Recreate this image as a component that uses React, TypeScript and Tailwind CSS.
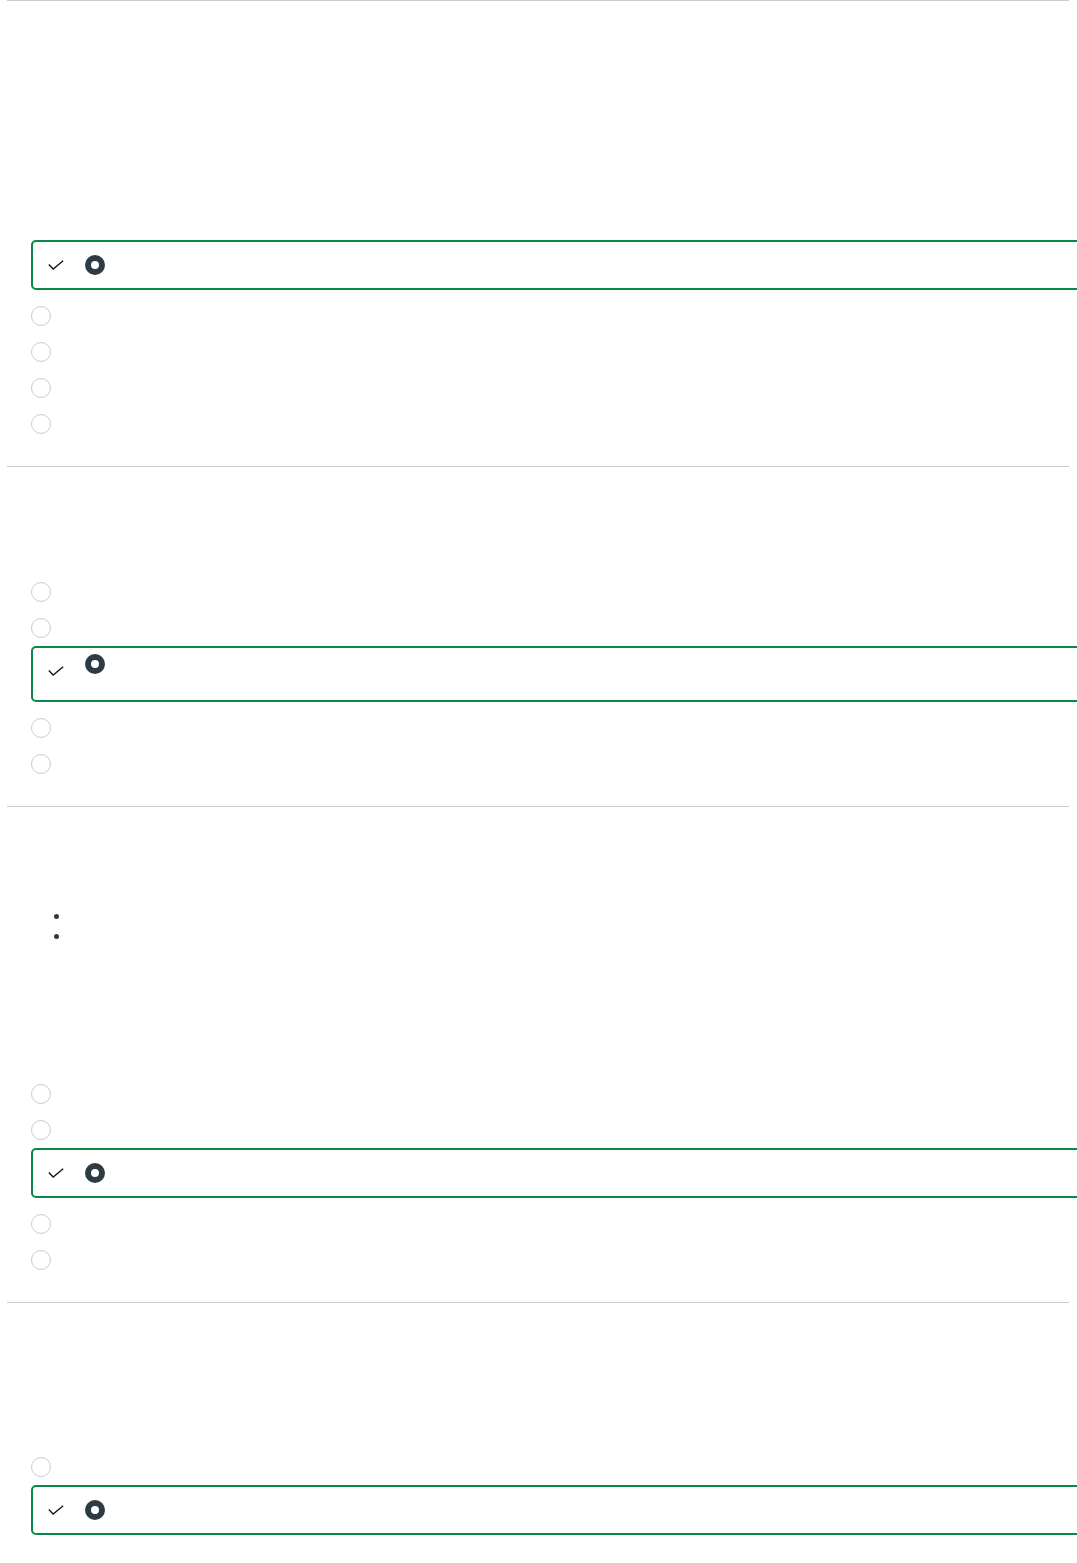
import React from "react";

type Opt = { correct?: boolean; tall?: boolean };

function EmptyRadio() {
  return <span className="block h-5 w-5 rounded-full border border-[#c7cdd1] bg-white" />;
}

function Check({ tall }: { tall?: boolean }) {
  return (
    <svg width="16" height="10" viewBox="0 0 16 10" className={tall ? "mb-[6px] shrink-0" : "shrink-0"}>
      <polyline points="0.8,4.6 5.2,9 15.2,0.8" fill="none" stroke="#111820" strokeWidth="1.4" />
    </svg>
  );
}

function Option({ correct, tall }: Opt) {
  if (!correct) {
    return (
      <div className="flex h-9 items-center">
        <EmptyRadio />
      </div>
    );
  }
  return (
    <div
      className={
        tall
          ? "mb-2 flex h-[56px] w-[calc(100%+40px)] items-center rounded-[5px] border-2 border-[#0b874b] pl-[15px]"
          : "mb-2 flex h-[50px] w-[calc(100%+40px)] items-center rounded-[5px] border-2 border-[#0b874b] pl-[15px]"
      }
    >
      <Check tall={tall} />
      <span
        className={
          tall
            ? "ml-[21px] mb-[20px] block h-5 w-5 rounded-full border-[6px] border-[#2d3b45] bg-white"
            : "ml-[21px] block h-5 w-5 rounded-full border-[6px] border-[#2d3b45] bg-white"
        }
      />
      <span className="ml-3 text-sm text-transparent">&nbsp;</span>
    </div>
  );
}

function Question({ header, options, children }: { header: number; options: Opt[]; children?: React.ReactNode }) {
  return (
    <section className="border-t border-[#c7cdd1] pb-6">
      <div style={{ height: header }}>{children}</div>
      <div className="pl-6">
        {options.map((o, i) => (
          <Option key={i} {...o} />
        ))}
      </div>
    </section>
  );
}

export default function App() {
  return (
    <div className="min-h-[1563px] w-full overflow-hidden bg-white" style={{ fontFamily: "Lato, 'Liberation Sans', sans-serif" }}>
      <div className="pl-[7px] pr-[8px]">
        <Question header={239} options={[{ correct: true }, {}, {}, {}, {}]} />
        <Question header={107} options={[{}, {}, { correct: true, tall: true }, {}, {}]} />
        <Question header={269} options={[{}, {}, { correct: true }, {}, {}]}>
          <ul className="pt-[99px] pl-[47px]">
            <li className="flex h-5 items-center">
              <span className="block h-[5px] w-[5px] rounded-full bg-[#2d3b45]" />
            </li>
            <li className="flex h-5 items-center">
              <span className="block h-[5px] w-[5px] rounded-full bg-[#2d3b45]" />
            </li>
          </ul>
        </Question>
        <Question header={146} options={[{}, { correct: true }]} />
      </div>
    </div>
  );
}
